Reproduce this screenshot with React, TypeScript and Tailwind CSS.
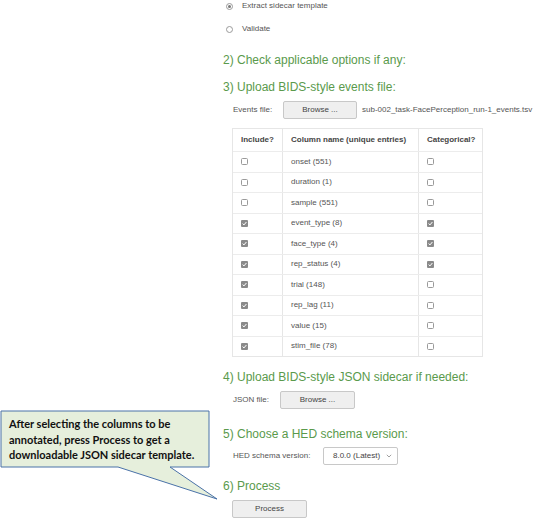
import React from "react"

type Row = { name: string; include: boolean; categorical: boolean }

const rows: Row[] = [
  { name: "onset (551)", include: false, categorical: false },
  { name: "duration (1)", include: false, categorical: false },
  { name: "sample (551)", include: false, categorical: false },
  { name: "event_type (8)", include: true, categorical: true },
  { name: "face_type (4)", include: true, categorical: true },
  { name: "rep_status (4)", include: true, categorical: true },
  { name: "trial (148)", include: true, categorical: false },
  { name: "rep_lag (11)", include: true, categorical: false },
  { name: "value (15)", include: true, categorical: false },
  { name: "stim_file (78)", include: true, categorical: false },
]

const Box = ({ checked }: { checked: boolean }) =>
  checked ? (
    <span className="flex h-[7px] w-[7px] items-center justify-center rounded-[1px] bg-[#8a8a8a]">
      <svg width="5" height="5" viewBox="0 0 5 5">
        <path d="M0.6 2.6 L2 3.9 L4.4 1" stroke="white" strokeWidth="1" fill="none" />
      </svg>
    </span>
  ) : (
    <span className="block h-[7px] w-[7px] rounded-[1.5px] border border-[#9a9a9a] bg-white" />
  )

const Radio = ({ on }: { on: boolean }) => (
  <span className="flex h-[7px] w-[7px] items-center justify-center rounded-full border border-[#9a9a9a] bg-white">
    {on && <span className="block h-[3px] w-[3px] rounded-full bg-[#777]" />}
  </span>
)

const Heading = ({ children, className }: { children: React.ReactNode; className: string }) => (
  <div className={`flex h-4 items-center text-[12px] leading-none text-[#5a9a4c] ${className}`}>{children}</div>
)

const Button = ({ label, className }: { label: string; className: string }) => (
  <div
    className={`flex items-center justify-center rounded-[2px] border border-[#c8c8c8] bg-[#efefef] text-[8px] text-[#444] ${className}`}
  >
    {label}
  </div>
)

export default function App() {
  return (
    <div
      className="relative h-[520px] w-[560px] overflow-hidden bg-white text-[8px] text-[#555]"
      style={{ fontFamily: '"Liberation Sans", Arial, sans-serif' }}
    >
      <div className="flex flex-col pl-[223px]">
        <div className="flex h-3 items-center gap-[9px] pl-[3px]">
          <Radio on />
          <span>Extract sidecar template</span>
        </div>
        <div className="mt-[11px] flex h-3 items-center gap-[9px] pl-[3px]">
          <Radio on={false} />
          <span>Validate</span>
        </div>

        <Heading className="mt-[17px]">2) Check applicable options if any:</Heading>
        <Heading className="mt-[11px]">3) Upload BIDS-style events file:</Heading>

        <div className="mt-[6px] flex h-[18px] items-center pl-[10px]">
          <span className="w-[50px]">Events file:</span>
          <Button label="Browse ..." className="h-[18px] w-[74px]" />
          <span className="ml-[5px]">sub-002_task-FacePerception_run-1_events.tsv</span>
        </div>

        <div className="ml-[9px] mt-[9px] w-[251px] border border-[#e6e6e6]">
          <div className="flex h-[22px] items-center font-semibold text-[#444]">
            <div className="flex h-full w-[49px] items-center pl-[8px]">Include?</div>
            <div className="flex h-full w-[136px] items-center border-l border-[#e6e6e6] pl-[8px]">
              Column name (unique entries)
            </div>
            <div className="flex h-full flex-1 items-center border-l border-[#e6e6e6] pl-[8px]">Categorical?</div>
          </div>
          {rows.map((r) => (
            <div key={r.name} className="flex h-[20.5px] items-center border-t border-[#ececec]">
              <div className="flex h-full w-[49px] items-center pl-[8px]">
                <Box checked={r.include} />
              </div>
              <div className="flex h-full w-[136px] items-center border-l border-[#e6e6e6] pl-[8px]">{r.name}</div>
              <div className="flex h-full flex-1 items-center border-l border-[#e6e6e6] pl-[8px]">
                <Box checked={r.categorical} />
              </div>
            </div>
          ))}
        </div>

        <Heading className="mt-[12px]">4) Upload BIDS-style JSON sidecar if needed:</Heading>
        <div className="mt-[6px] flex h-[18px] items-center pl-[10px]">
          <span className="w-[47px]">JSON file:</span>
          <Button label="Browse ..." className="h-[18px] w-[75px]" />
        </div>

        <Heading className="mt-[17px]">5) Choose a HED schema version:</Heading>
        <div className="mt-[5px] flex h-[18px] items-center pl-[10px]">
          <span className="w-[90px]">HED schema version:</span>
          <div className="flex h-[18px] w-[75px] items-center justify-between rounded-[2px] border border-[#c8c8c8] bg-white pl-[9px] pr-[5px] text-[#444]">
            <span>8.0.0 (Latest)</span>
            <svg width="6" height="4" viewBox="0 0 6 4">
              <path d="M0.8 0.8 L3 3 L5.2 0.8" stroke="#888" strokeWidth="0.8" fill="none" />
            </svg>
          </div>
        </div>

        <Heading className="mt-[13px]">6) Process</Heading>
        <Button label="Process" className="ml-[9px] mt-[6px] h-[18px] w-[75px]" />
      </div>

      <svg className="absolute left-0 top-0" width="560" height="520">
        <path
          d="M1 411 H209 V467 H170 L217 499 L118 467 H1 Z"
          fill="#e6efdc"
          stroke="#4a72a8"
          strokeWidth="1"
        />
      </svg>
      <div
        className="absolute left-[9px] top-[416px] text-[11px] font-bold leading-[15.5px] text-[#111]"
        style={{ fontFamily: "Lato, 'Open Sans', sans-serif" }}
      >
        After selecting the columns to be
        <br />
        annotated, press Process to get a
        <br />
        downloadable JSON sidecar template.
      </div>
    </div>
  )
}
